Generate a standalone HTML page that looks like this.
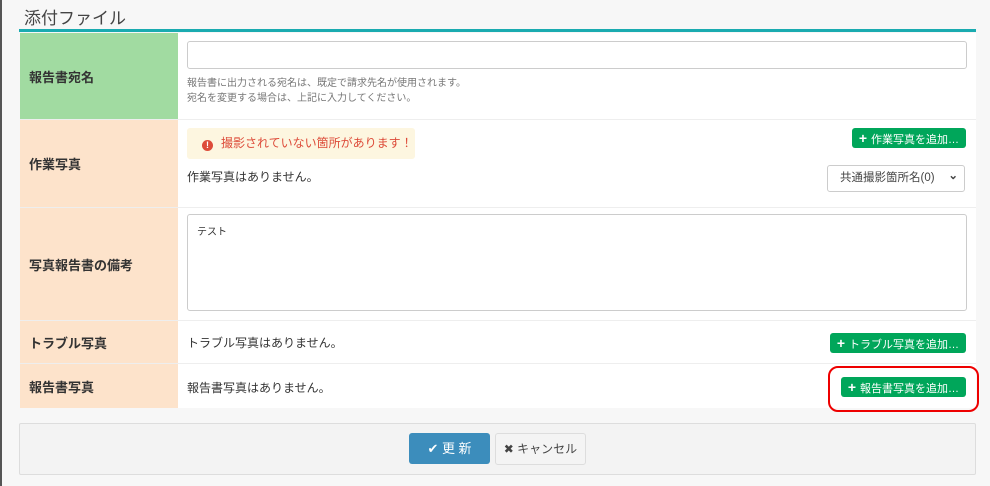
<!DOCTYPE html>
<html><head><meta charset="utf-8"><style>
body{margin:0;width:990px;height:486px;background:#f7f7f7;font-family:"Liberation Sans","Noto Sans CJK JP",sans-serif;position:relative;overflow:hidden;color:#333;font-size:12px}
.abs{position:absolute}
.title{left:24px;top:4px;font-size:17px;color:#444}
.line{left:19px;top:29px;width:957px;height:3px;background:#1aabb0}
.tbl{left:20px;top:33px;width:956px;background:#fff}
.row{position:absolute;left:0;width:956px;border-bottom:1px solid #eee}
.lab{position:absolute;left:0;top:0;bottom:0;width:158px;font-weight:bold;font-size:13px;display:flex;align-items:center;padding-left:9px;box-sizing:border-box;color:#333}
.g{background:#a1dba1}.o{background:#fde3cb}
.btn{position:absolute;right:10px;background:#00a65a;color:#fff;font-size:11px;border-radius:3px;height:20px;line-height:20px;padding:0 7px;white-space:nowrap}
.btn b{font-size:14px;margin-right:4px}
</style></head><body>
<div class="abs" style="left:0;top:0;width:2px;height:486px;background:#555"></div>
<div class="abs title">添付ファイル</div>
<div class="abs line"></div>
<div class="abs tbl" style="height:375px">
 <div class="row" style="top:0;height:86px"><div class="lab g">報告書宛名</div>
  <div class="abs" style="left:167px;top:8px;width:778px;height:26px;border:1px solid #ccc;border-radius:3px"></div>
  <div class="abs" style="left:167px;top:43px;font-size:10px;color:#777;line-height:15px">報告書に出力される宛名は、既定で請求先名が使用されます。<br>宛名を変更する場合は、上記に入力してください。</div>
 </div>
 <div class="row" style="top:87px;height:87px"><div class="lab o">作業写真</div>
  <div class="abs" style="left:167px;top:8px;width:228px;height:31px;background:#fdf6e0;border-radius:3px;color:#dd4b39;font-size:12px;line-height:31px;white-space:nowrap"><span style="display:inline-block;width:11px;height:11px;border-radius:50%;background:#dd4b39;color:#fff;font-size:9px;line-height:11px;text-align:center;margin:0 8px 0 15px;font-weight:bold;vertical-align:-1px">!</span>撮影されていない箇所があります！</div>
  <div class="abs" style="left:167px;top:48px;font-size:12px">作業写真はありません。</div>
  <div class="btn" style="top:8px"><b>+</b>作業写真を追加…</div>
  <div class="abs" style="left:807px;top:45px;width:124px;height:25px;border:1px solid #ccc;border-radius:3px;font-size:11.5px;line-height:25px;padding-left:12px;color:#444">共通撮影箇所名(0)<span style="position:absolute;right:6px;top:-2px;font-weight:bold">⌄</span></div>
 </div>
 <div class="row" style="top:175px;height:112px"><div class="lab o">写真報告書の備考</div>
  <div class="abs" style="left:167px;top:6px;width:780px;height:97px;border:1px solid #ccc;border-radius:3px;font-size:10px;padding:8px 9px;box-sizing:border-box">テスト</div>
 </div>
 <div class="row" style="top:288px;height:42px"><div class="lab o">トラブル写真</div>
  <div class="abs" style="left:167px;top:13px">トラブル写真はありません。</div>
  <div class="btn" style="top:12px"><b>+</b>トラブル写真を追加…</div>
 </div>
 <div class="row" style="top:331px;height:44px;border:0"><div class="lab o">報告書写真</div>
  <div class="abs" style="left:167px;top:15px">報告書写真はありません。</div>
  <div class="btn" style="top:13px"><b>+</b>報告書写真を追加…</div>
 </div>
</div>
<div class="abs" style="left:828px;top:366px;width:147px;height:42px;border:2px solid #e00;border-radius:10px"></div>
<div class="abs" style="left:19px;top:423px;width:955px;height:50px;background:#f3f3f3;border:1px solid #ddd;border-radius:2px"></div>
<div class="abs" style="left:409px;top:433px;width:81px;height:31px;background:#3c8dbc;border-radius:3px;color:#fff;font-size:13px;line-height:31px;text-align:center">✔ 更 新</div>
<div class="abs" style="left:495px;top:433px;width:89px;height:30px;background:#f4f4f4;border:1px solid #ddd;border-radius:3px;font-size:12px;line-height:30px;text-align:center;color:#444">✖ キャンセル</div>
</body></html>
